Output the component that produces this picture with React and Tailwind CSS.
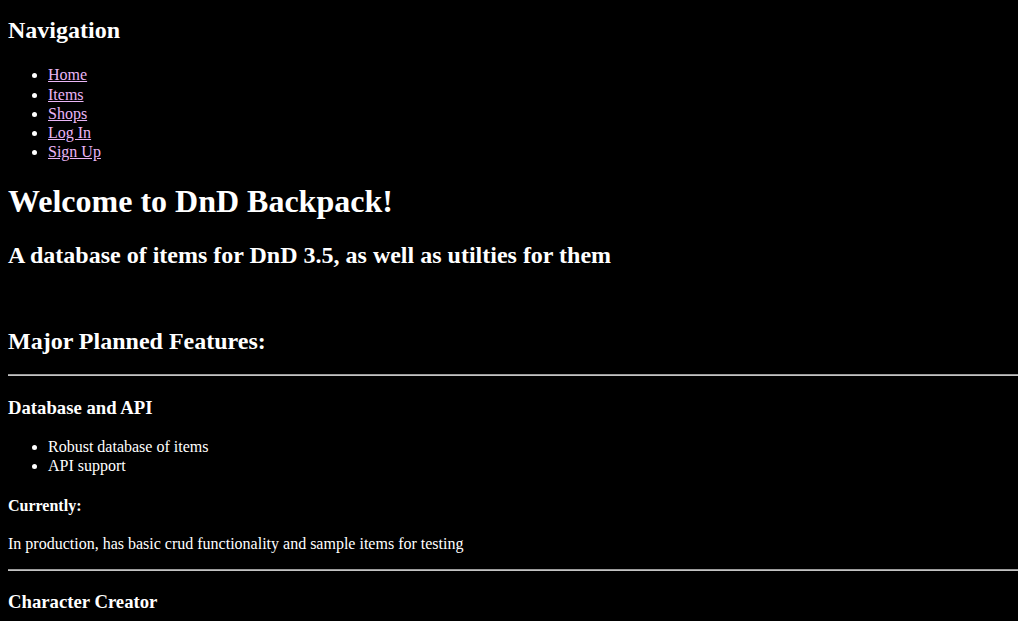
const NAV_LINKS = ['Home', 'Items', 'Shops', 'Log In', 'Sign Up']

function Divider({ className = '' }) {
  return <hr className={`-mr-2 h-0 border-0 border-t border-b border-t-[#9a9a9a] border-b-[#c4c4c4] ${className}`} />
}

export default function App() {
  return (
    <div className="min-h-screen bg-black px-2 pt-[16px] font-['Liberation_Serif','Times_New_Roman',serif] leading-[1.2] text-white">
      <h2 className="text-[24px] font-bold leading-[28.8px]">Navigation</h2>
      <ul className="mt-[20.5px] list-disc pl-10">
        {NAV_LINKS.map((label) => (
          <li key={label} className="text-[16px] leading-[19.2px]">
            <a href="#" className="text-[#eab6f6] underline">
              {label}
            </a>
          </li>
        ))}
      </ul>

      <h1 className="mt-[21px] text-[32px] font-bold leading-[38.4px]">Welcome to DnD Backpack!</h1>
      <h2 className="mt-[20px] text-[24px] font-bold leading-[28.8px]">
        A database of items for DnD 3.5, as well as utilties for them
      </h2>

      <h2 className="mt-[57px] text-[24px] font-bold leading-[28.8px]">Major Planned Features:</h2>
      <Divider className="mt-[18.2px]" />

      <h3 className="mt-[21px] text-[18.72px] font-bold leading-[22.46px]">Database and API</h3>
      <ul className="mt-[18px] list-disc pl-10">
        <li className="text-[16px] leading-[19.2px]">Robust database of items</li>
        <li className="text-[16px] leading-[19.2px]">API support</li>
      </ul>

      <h4 className="mt-[21px] text-[16px] font-bold leading-[19.2px]">Currently:</h4>
      <p className="mt-[18px] text-[16px] leading-[19.2px]">
        In production, has basic crud functionality and sample items for testing
      </p>
      <Divider className="mt-[16.5px]" />

      <h3 className="mt-[20px] text-[18.72px] font-bold leading-[22.46px]">Character Creator</h3>
    </div>
  )
}
